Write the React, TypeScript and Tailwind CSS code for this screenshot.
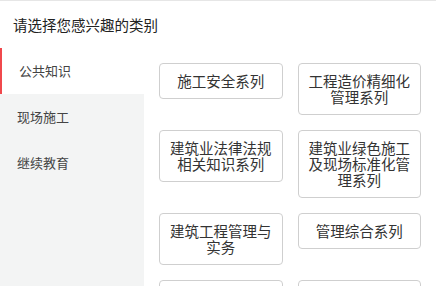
import * as React from "react";
import { useState } from "react";

const tabs = ["公共知识", "现场施工", "继续教育"];

const cats = [
  "施工安全系列",
  "工程造价精细化管理系列",
  "建筑业法律法规相关知识系列",
  "建筑业绿色施工及现场标准化管理系列",
  "建筑工程管理与实务",
  "管理综合系列",
  "安全生产管理系列",
  "建筑信息化系列",
];

const cx = (...c: Array<string | false | null | undefined>) => c.filter(Boolean).join(" ");

export default function App() {
  const [active, setActive] = useState(0);

  return (
    <div
      className="h-screen overflow-hidden flex flex-col bg-white border-t border-[#e6e6e6]"
      style={{ fontFamily: '"Noto Sans CJK SC", "Noto Sans", sans-serif' }}
    >
      {/* header */}
      <div className="h-[47px] shrink-0 flex items-center px-[13px] text-[14.5px] text-[#222]">
        请选择您感兴趣的类别
      </div>

      <div className="flex flex-1 min-h-0">
        {/* sidebar */}
        <div className="w-[144px] shrink-0 bg-[#f3f4f4] flex flex-col">
          {tabs.map((t, i) => (
            <button
              key={t}
              type="button"
              onClick={() => setActive(i)}
              className={cx(
                "h-[46px] flex items-center pl-[17px] text-[13px] text-[#444] text-left",
                i === active && "bg-white border-l-2 border-[#f0484c] pl-[15px]"
              )}
            >
              {t}
            </button>
          ))}
        </div>

        {/* category grid, scrolls under the fold */}
        <div className="flex-1 overflow-y-auto p-[15px] grid grid-cols-2 gap-x-[15px] gap-y-[15px] items-start content-start">
          {cats.map((c) => (
            <button
              key={c}
              type="button"
              className="border border-[#cfcfcf] rounded-[4px] px-2 py-[9px] text-[14.5px] leading-[16px] text-[#333] text-center bg-white"
            >
              {c}
            </button>
          ))}
        </div>
      </div>
    </div>
  );
}
